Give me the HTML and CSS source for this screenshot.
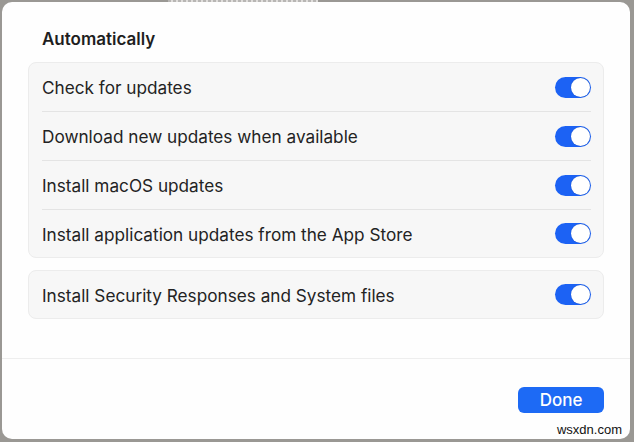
FILE: index.html
```html
<!DOCTYPE html>
<html>
<head>
<meta charset="utf-8">
<link rel="stylesheet" href="styles.css">
</head>
<body>
<div class="frame">
  <div class="topline"></div>
  <div class="sheet">
    <div class="content">
      <h2 class="heading">Automatically</h2>
      <div class="group">
        <div class="row"><span class="label">Check for updates</span><span class="toggle"><span class="knob"></span></span></div>
        <div class="row"><span class="label">Download new updates when available</span><span class="toggle"><span class="knob"></span></span></div>
        <div class="row"><span class="label">Install macOS updates</span><span class="toggle"><span class="knob"></span></span></div>
        <div class="row"><span class="label">Install application updates from the App Store</span><span class="toggle"><span class="knob"></span></span></div>
      </div>
      <div class="group">
        <div class="row"><span class="label">Install Security Responses and System files</span><span class="toggle"><span class="knob"></span></span></div>
      </div>
    </div>
    <div class="footer">
      <button class="done">Done</button>
    </div>
  </div>
  <div class="watermark">wsxdn.com</div>
</div>
</body>
</html>
```
FILE: styles.css
```css
html, body {
  margin: 0;
  padding: 0;
  width: 634px;
  height: 442px;
  overflow: hidden;
  background: #8e8a86;
  font-family: Inter, "Liberation Sans", Arial, sans-serif;
}
.frame {
  position: relative;
  width: 634px;
  height: 442px;
  padding: 2px 4px 3px 2px;
  box-sizing: border-box;
  background: #9a9894;
}
.topline {
  position: absolute;
  top: 0;
  left: 168px;
  width: 150px;
  height: 2px;
  background: repeating-linear-gradient(90deg, #b8b6b4 0 3px, #e0dedc 3px 5px);
}
.sheet {
  width: 100%;
  height: 100%;
  background: #fefefe;
  border-radius: 10px;
  display: flex;
  flex-direction: column;
  box-sizing: border-box;
}
.content {
  padding: 27px 26px 0 26px;
  height: 357px;
  box-sizing: border-box;
  border-bottom: 1px solid #eeeeee;
}
.heading {
  margin: 0 0 13px 14px;
  font-size: 17px;
  font-weight: 600;
  color: #1e1e1e;
  line-height: 20px;
}
.group {
  background: #f7f7f7;
  border: 1px solid #ececec;
  border-radius: 8px;
  padding: 0 12px 0 13px;
  margin-bottom: 12px;
}
.row {
  height: 48px;
  display: flex;
  align-items: center;
  justify-content: space-between;
  border-bottom: 1px solid #e4e4e4;
}
.row:last-child {
  border-bottom: none;
  height: 47px;
}
.label {
  font-size: 17.2px;
  color: #232323;
  padding-top: 1px;
}
.toggle {
  width: 36px;
  height: 21px;
  border-radius: 11px;
  background: #1c62f4;
  display: flex;
  align-items: center;
  justify-content: flex-end;
  padding: 0 1px;
  box-sizing: border-box;
}
.knob {
  width: 19px;
  height: 19px;
  border-radius: 50%;
  background: #ffffff;
  box-shadow: 0 0 1px rgba(0,0,0,0.3);
}
.footer {
  flex: 1;
  display: flex;
  justify-content: flex-end;
  align-items: flex-start;
  padding: 28px 26px 0 0;
}
.done {
  width: 86px;
  height: 26px;
  border: none;
  border-radius: 6px;
  background: #1d6af5;
  color: #ffffff;
  font-family: Inter, "Liberation Sans", Arial, sans-serif;
  font-size: 17px;
  font-weight: 500;
  padding: 0;
}
.watermark {
  position: absolute;
  right: 12px;
  bottom: 5px;
  font-size: 13px;
  color: #111;
  font-family: "Liberation Sans", Arial, sans-serif;
}
```
